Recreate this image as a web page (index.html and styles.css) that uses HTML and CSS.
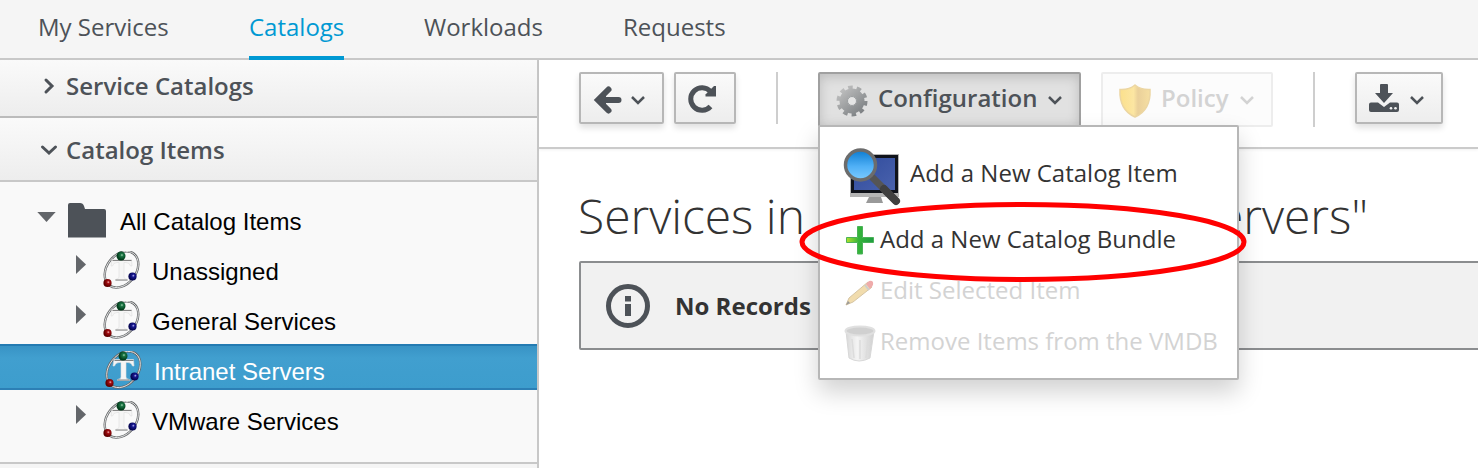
FILE: index.html
```html
<!DOCTYPE html>
<html lang="en">
<head>
<meta charset="utf-8">
<title>Catalogs</title>
<link rel="stylesheet" href="styles.css">
</head>
<body>
<svg class="defs" width="0" height="0" aria-hidden="true">
  <defs>
    <radialGradient id="ballGreen" cx=".6" cy=".4"><stop offset="0" stop-color="#9fd0ad"/><stop offset=".35" stop-color="#187342"/><stop offset="1" stop-color="#033d1c"/></radialGradient>
    <radialGradient id="ballRed" cx=".6" cy=".4"><stop offset="0" stop-color="#efb5b5"/><stop offset=".35" stop-color="#a30d12"/><stop offset="1" stop-color="#620000"/></radialGradient>
    <radialGradient id="ballBlue" cx=".6" cy=".4"><stop offset="0" stop-color="#b8b8f0"/><stop offset=".35" stop-color="#171790"/><stop offset="1" stop-color="#050553"/></radialGradient>
    <linearGradient id="gearFill" gradientUnits="userSpaceOnUse" x1="-12" y1="-14" x2="12" y2="14"><stop offset="0" stop-color="#c4c4c4"/><stop offset="1" stop-color="#777b7e"/></linearGradient>
    <linearGradient id="shieldFill"><stop offset="0" stop-color="#fbe08c"/><stop offset=".45" stop-color="#fce6a2"/><stop offset=".6" stop-color="#ead09a"/><stop offset="1" stop-color="#f6dfa2"/></linearGradient>
    <linearGradient id="screenFill" x2="1" y2="1"><stop offset="0" stop-color="#2f4b9c"/><stop offset="1" stop-color="#4a62ad"/></linearGradient>
    <linearGradient id="lensFill" x2="0" y2="1"><stop offset="0" stop-color="#0b7bd0"/><stop offset=".55" stop-color="#50b0f6"/><stop offset="1" stop-color="#7ccbff"/></linearGradient>
    <linearGradient id="plusFill"><stop offset="0" stop-color="#b1e12b"/><stop offset=".45" stop-color="#35b43a"/><stop offset="1" stop-color="#1f9c42"/></linearGradient>
    <linearGradient id="binFill"><stop offset="0" stop-color="#d8d8d8"/><stop offset=".4" stop-color="#f4f4f4"/><stop offset="1" stop-color="#d0d0d0"/></linearGradient>
    <symbol id="catalog" viewBox="0 0 38 38">
      <ellipse cx="18.500" cy="18.500" rx="20" ry="14.500" transform="rotate(-52 18.500 18.500)" fill="none" stroke="#65686a" stroke-width="2.400"/>
      <ellipse cx="18.500" cy="18.500" rx="20" ry="14.500" transform="rotate(-52 18.500 18.500)" fill="none" stroke="#e4e4e4" stroke-width=".9"/>
      <path class="letter" d="M9 8.500H28.500L29 15H27.500Q26.500 11.500 23 11.500H21V26Q21 28 24.500 28.500V29.500H12.500V28.500Q16 28 16 26V11.500H14Q10.500 11.500 9.500 15H8Z"/>
      <path d="M9.500 9.500H28.500M12.500 29H24.500" fill="none" stroke="#666" stroke-width=".8"/>
      <circle cx="18" cy="5" r="4.500" fill="url(#ballGreen)"/>
      <circle cx="29.500" cy="25.500" r="4.100" fill="url(#ballBlue)"/>
      <circle cx="4.500" cy="32" r="4.100" fill="url(#ballRed)"/>
    </symbol>
    <symbol id="chevron" viewBox="0 0 16 10"><path d="M2 2L8 8L14 2" fill="none" stroke="currentColor" stroke-width="2.500"/></symbol>
  </defs>
</svg>

<nav class="tabs">
  <a class="tab tab-services">My Services</a>
  <a class="tab tab-catalogs active">Catalogs</a>
  <a class="tab tab-workloads">Workloads</a>
  <a class="tab tab-requests">Requests</a>
</nav>

<div class="body">
  <aside class="sidebar">
    <div class="section section-first">
      <svg class="section-arrow" viewBox="0 0 18 18"><path d="M6 3L12 9L6 15" fill="none" stroke="currentColor" stroke-width="3" stroke-linecap="round"/></svg>
      <span>Service Catalogs</span>
    </div>
    <div class="section section-open">
      <svg class="section-arrow" viewBox="0 0 18 18"><path d="M2.500 6L9 12L15.500 6" fill="none" stroke="currentColor" stroke-width="3" stroke-linecap="round"/></svg>
      <span>Catalog Items</span>
    </div>
    <div class="tree">
      <div class="row root">
        <svg class="open-arrow" viewBox="0 0 20 12"><path d="M0 0H20L10 11Z"/></svg>
        <svg class="folder" viewBox="0 0 38 36"><path d="M0 3Q0 1 2 1H12Q15 1 16 4L17 7H36Q38 7 38 9V35.500H0Z"/></svg>
        <span class="label">All Catalog Items</span>
      </div>
      <div class="row">
        <svg class="closed-arrow" viewBox="0 0 10 19"><path d="M0 0L10 9.500L0 19Z"/></svg>
        <svg class="catalog"><use href="#catalog"/></svg>
        <span class="label">Unassigned</span>
      </div>
      <div class="row">
        <svg class="closed-arrow" viewBox="0 0 10 19"><path d="M0 0L10 9.500L0 19Z"/></svg>
        <svg class="catalog"><use href="#catalog"/></svg>
        <span class="label">General Services</span>
      </div>
      <div class="row selected">
        <svg class="catalog"><use href="#catalog"/></svg>
        <span class="label">Intranet Servers</span>
      </div>
      <div class="row">
        <svg class="closed-arrow" viewBox="0 0 10 19"><path d="M0 0L10 9.500L0 19Z"/></svg>
        <svg class="catalog"><use href="#catalog"/></svg>
        <span class="label">VMware Services</span>
      </div>
    </div>
    <div class="side-foot"></div>
  </aside>

  <main class="main">
    <div class="toolbar">
      <div class="btn back">
        <svg class="ic-back" viewBox="0 0 28 28"><path d="M14.500 3.500L4 14L14.500 24.500M5 14H24.500" fill="none" stroke="currentColor" stroke-width="6" stroke-linecap="round"/><path d="M1 14L12 4V24Z" fill="currentColor"/></svg>
        <svg class="chev"><use href="#chevron"/></svg>
      </div>
      <div class="btn refresh">
        <svg class="ic-refresh" viewBox="0 0 28 28"><path d="M22.500 6.500A11.300 11.300 0 1 0 22.500 21.500" fill="none" stroke="currentColor" stroke-width="5"/><path d="M28 1V11.500H17.500V9.500L26 1Z" fill="currentColor"/></svg>
      </div>
      <div class="sep"></div>
      <div class="btn config">
        <svg class="ic-gear" viewBox="-16 -16 32 32">
          <circle r="12.500" fill="none" stroke="url(#gearFill)" stroke-width="6" stroke-dasharray="4.200 3.654"/>
          <circle r="8.500" fill="none" stroke="url(#gearFill)" stroke-width="8"/>
          <circle r="4.500" fill="#e5e5e5" stroke="#9a9d9f"/>
        </svg>
        <span class="config-text">Configuration</span>
        <svg class="chev"><use href="#chevron"/></svg>
      </div>
      <div class="btn policy">
        <svg class="ic-shield" viewBox="0 0 32 34"><path d="M16 1Q22 6 31 5.500Q32 26 16 33Q0 26 1 5.500Q10 6 16 1Z" fill="url(#shieldFill)" stroke="#ecd6a2" stroke-width="1.500"/></svg>
        <span class="policy-text">Policy</span>
        <svg class="chev"><use href="#chevron"/></svg>
      </div>
      <div class="sep sep-tall"></div>
      <div class="btn download">
        <svg class="ic-download" viewBox="0 0 30 28"><path d="M12 0H18Q19 0 19 1V9H24L15 19L6 9H11V1Q11 0 12 0Z" fill="currentColor"/><path d="M2 18.500H9L15 23L21 18.500H28Q30 18.500 30 20.500V26Q30 28 28 28H2Q0 28 0 26V20.500Q0 18.500 2 18.500Z" fill="currentColor"/><circle cx="22" cy="24.300" r="1.300" fill="#f5f5f5"/><circle cx="26.500" cy="24.300" r="1.300" fill="#f5f5f5"/></svg>
        <svg class="chev"><use href="#chevron"/></svg>
      </div>
      <div class="menu">
        <div class="item item-large">
          <svg class="ic-monitor" viewBox="0 0 56 58">
            <path d="M5 6H54V49H5Z" fill="#b5b5b5"/><path d="M6 7H53V45H6Z" fill="#10131b"/><path d="M9 10H50V42H9Z" fill="url(#screenFill)"/>
            <path d="M24 49H36L38 55H21Z" fill="#999"/>
            <path d="M28 30L51 53" stroke="#555" stroke-width="7" stroke-linecap="round"/><path d="M39 41L51 53" stroke="#404040" stroke-width="8" stroke-linecap="round"/>
            <circle cx="15.500" cy="17" r="15" fill="url(#lensFill)" stroke="#6c6c6c" stroke-width="3.500"/>
          </svg>
          <span>Add a New Catalog Item</span>
        </div>
        <div class="item item-bundle">
          <svg class="ic-menu" viewBox="0 0 32 32"><path d="M13.500 2.500H18.500V13.500H29.500V18.500H18.500V30H13.500V18.500H2.500V13.500H13.500Z" fill="url(#plusFill)" stroke="#4bb258"/></svg>
          <span>Add a New Catalog Bundle</span>
        </div>
        <div class="item disabled">
          <svg class="ic-menu" viewBox="0 0 32 32"><path d="M2 28L5 21L24 5L28 10L9 25Z" fill="#f1dcad" stroke="#d6c5a4"/><path d="M22 7L25 4Q30 3 29 8L26 12Z" fill="#efabab"/><path d="M21 8L25 13" stroke="#ccc" stroke-width="2"/><path d="M2 28L4 24L6 26Z" fill="#999"/></svg>
          <span>Edit Selected Item</span>
        </div>
        <div class="item disabled">
          <svg class="ic-bin" viewBox="0 0 32 38"><path d="M2 6L5 33Q15 39 26 33L30 6Z" fill="url(#binFill)" stroke="#d8d8d8"/><path d="M8 14L10 33M16 15V34M24 14L22 33" stroke="#dcdcdc" stroke-width="1.500"/><ellipse cx="16" cy="6" rx="14.500" ry="4.500" fill="#d0d0d0" stroke="#e0e0e0" stroke-width="2"/></svg>
          <span>Remove Items from the VMDB</span>
        </div>
      </div>
    </div>
    <h1 class="title">Services in Catalog "Intranet Servers"</h1>
    <div class="notice">
      <svg class="ic-info" viewBox="0 0 44 44"><circle cx="22" cy="22" r="19.500" fill="none" stroke="#4d5258" stroke-width="5"/><path d="M19 12H25V17.500H19ZM19 20H25V32H19Z" fill="#4d5258"/></svg>
      <span>No Records</span>
    </div>
  </main>
</div>
<svg class="highlight" viewBox="0 0 450 84"><ellipse cx="225" cy="42" rx="221" ry="37.500" fill="none" stroke="#f00" stroke-width="5"/></svg>
</body>
</html>
```
FILE: styles.css
```css
* { box-sizing: border-box; }
body {
  margin: 0;
  width: 1478px;
  height: 468px;
  overflow: hidden;
  position: relative;
  display: flex;
  flex-direction: column;
  background: #fff;
  color: #4d5258;
  font: 24px/32px "Open Sans", sans-serif;
}
svg { display: block; flex: none; overflow: visible; }
span { white-space: nowrap; }
.defs { position: absolute; }

.tabs {
  height: 60px;
  flex: none;
  display: flex;
  padding-left: 38px;
  background: #f5f5f5;
  border-bottom: 2px solid #c8c8c8;
}
.tab { height: 60px; padding-top: 11px; white-space: nowrap; }
.tab-services { width: 211px; }
.tab-catalogs { width: 95px; margin-right: 80px; }
.tab-workloads { width: 199px; }
.tab.active { color: #0099d3; border-bottom: 4px solid #0099d3; }

.body { flex: 1; display: flex; min-height: 0; }
.sidebar { width: 539px; flex: none; border-right: 2px solid #c8c8c8; background: #f9f9f9; }
.section {
  height: 64px;
  display: flex;
  align-items: center;
  gap: 8px;
  padding-left: 40px;
  border-bottom: 2px solid #c8c8c8;
  background: linear-gradient(#fafafa, #ededed);
  font-weight: 600;
}
.section-first { height: 58px; padding-bottom: 4px; border-color: #bbb; }
.section-open { padding-top: 2px; }
.section-arrow { width: 18px; height: 18px; }

.tree {
  height: 280px;
  padding-top: 12px;
  display: flex;
  flex-direction: column;
  gap: 4px;
  font-family: "Liberation Sans", Arial, sans-serif;
  color: #000;
}
.row { height: 46px; display: flex; align-items: center; padding-left: 76px; }
.label { padding-top: 10px; }
.root { padding-left: 37px; }
.open-arrow { width: 19px; height: 11px; fill: #63666a; margin: 0 12px 0 0; }
.folder { width: 38px; height: 36px; fill: #4d5258; margin-right: 14px; margin-top: 5px; }
.closed-arrow { width: 10px; height: 19px; fill: #63666a; margin: 0 17px 6px 0; }
.catalog { width: 38px; height: 38px; margin: 6px 11px 0 0; }
.letter { fill: #f5f5f5; stroke: #ddd; stroke-width: .6; }
.selected {
  padding-left: 105px;
  color: #fff;
  background: linear-gradient(#3893c5, #419fcf 12px, #3d9dcd);
  border-top: 2px solid #247bb2;
  border-bottom: 2px solid #2c7fb5;
}
.side-foot { height: 8px; border-top: 2px solid #c8c8c8; background: #f5f5f5; }

.main { flex: 1; min-width: 0; }
.toolbar {
  position: relative;
  height: 89px;
  display: flex;
  align-items: flex-start;
  padding: 12px 0 0 40px;
  border-bottom: 2px solid #cbcbcb;
  box-shadow: 0 1px 3px rgba(0, 0, 0, .06);
}
.btn {
  height: 52px;
  flex: none;
  display: flex;
  align-items: center;
  border: 2px solid #b7b7b7;
  border-radius: 2px;
  background: linear-gradient(#fafafa, #ededed);
  box-shadow: 0 4px 6px rgba(3, 3, 3, .12);
  font-weight: 600;
}
.chev { width: 16px; height: 10px; margin-top: 3px; }
.back { width: 85px; padding-left: 13px; gap: 8px; margin-right: 10px; }
.ic-back { width: 28px; height: 28px; margin-top: 4px; }
.refresh { width: 62px; padding-left: 12px; }
.ic-refresh { width: 28px; height: 28px; margin-top: 2px; }
.sep { width: 2px; height: 52px; margin: 0 40px; background: #cecece; }
.sep-tall { height: 55px; }
.config {
  width: 263px;
  height: 55px;
  padding-left: 16px;
  border-color: #a0a0a0;
  background: #e1e1e1;
  box-shadow: inset 0 3px 12px rgba(0, 0, 0, .16);
  margin-right: 20px;
}
.ic-gear { width: 32px; height: 32px; margin: 2px 10px 0 0; }
.config-text { width: 159px; margin: -3px 10px 0 0; }
.config .chev, .policy .chev { margin-top: 0; }
.policy {
  width: 172px;
  height: 55px;
  padding-left: 16px;
  border-color: #ededed;
  background: #fcfcfc;
  box-shadow: none;
  color: #d3d3d3;
}
.ic-shield { width: 32px; height: 34px; margin: 2px 10px 0 0; }
.policy-text { width: 67px; margin: -3px 11px 0 0; }
.download { width: 88px; padding-left: 12px; gap: 10px; }

.ic-download { width: 30px; height: 28px; }

.menu {
  position: absolute;
  z-index: 2;
  left: 279px;
  top: 65px;
  width: 421px;
  height: 255px;
  padding: 18px 0 0 24px;
  background: #fff;
  border: 2px solid #b7b7b7;
  border-radius: 2px;
  box-shadow: 0 12px 24px rgba(3, 3, 3, .18);
  color: #333;
}
.item { height: 51px; display: flex; align-items: center; gap: 4px; }
.item-large { height: 60px; gap: 9px; padding: 3px 0 0 1px; }
.item-large span { margin-top: -8px; }
.item-bundle { height: 62px; padding-top: 8px; }
.item-bundle span { margin-top: -2px; }
.ic-monitor { width: 56px; height: 58px; }
.ic-menu { width: 32px; height: 32px; }
.ic-bin { width: 32px; height: 38px; }
.disabled { color: #d3d3d3; }
.disabled span { margin-top: -6px; }

.title {
  margin: 34px 0 0 39px;
  height: 78px;
  color: #333;
  font-size: 48px;
  line-height: 66px;
  font-weight: 300;
  letter-spacing: -.03px;
  white-space: nowrap;
}
.notice {
  height: 89px;
  margin-left: 40px;
  margin-right: -4px;
  display: flex;
  align-items: center;
  gap: 25px;
  padding-left: 25px;
  border: 2px solid #8b8d8f;
  border-radius: 2px;
  background: #f1f1f1;
  color: #333;
  font-weight: 700;
}
.ic-info { width: 44px; height: 44px; }
.highlight { position: absolute; z-index: 3; left: 798px; top: 200px; width: 450px; height: 84px; }
```
